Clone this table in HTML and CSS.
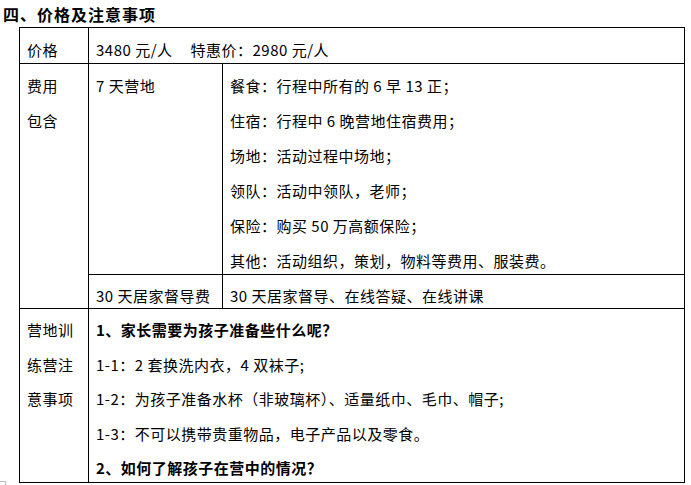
FILE: index.html
```html
<!DOCTYPE html>
<html lang="zh-CN">
<head>
<meta charset="utf-8">
<title>价格及注意事项</title>
<link rel="stylesheet" href="styles.css">
</head>
<body>
<div class="page">
  <h2 class="title">四、价格及注意事项</h2>
  <table class="info">
    <colgroup>
      <col class="c1">
      <col class="c2">
      <col class="c3">
    </colgroup>
    <tr class="r1">
      <td><div class="cell"><p>价格</p></div></td>
      <td colspan="2"><div class="cell"><p>3480 元/人<span class="gap"></span>特惠价：2980 元/人</p></div></td>
    </tr>
    <tr class="r2">
      <td rowspan="2"><div class="cell"><p>费用</p><p>包含</p></div></td>
      <td><div class="cell"><p>7 天营地</p></div></td>
      <td><div class="cell">
        <p>餐食：行程中所有的 6 早 13 正；</p>
        <p>住宿：行程中 6 晚营地住宿费用；</p>
        <p>场地：活动过程中场地；</p>
        <p>领队：活动中领队，老师；</p>
        <p>保险：购买 50 万高额保险；</p>
        <p>其他：活动组织，策划，物料等费用、服装费。</p>
      </div></td>
    </tr>
    <tr class="r3">
      <td><div class="cell"><p>30 天居家督导费</p></div></td>
      <td><div class="cell"><p>30 天居家督导、在线答疑、在线讲课</p></div></td>
    </tr>
    <tr class="r4">
      <td><div class="cell"><p>营地训</p><p>练营注</p><p>意事项</p></div></td>
      <td colspan="2"><div class="cell">
        <p class="strong">1、家长需要为孩子准备些什么呢？</p>
        <p>1-1：2 套换洗内衣，4 双袜子;</p>
        <p>1-2：为孩子准备水杯（非玻璃杯）、适量纸巾、毛巾、帽子;</p>
        <p>1-3：不可以携带贵重物品，电子产品以及零食。</p>
        <p class="strong">2、如何了解孩子在营中的情况？</p>
      </div></td>
    </tr>
  </table>
  <span class="corner"></span>
</div>
</body>
</html>
```
FILE: styles.css
```css
html, body {
  margin: 0;
  padding: 0;
  background: #fff;
}
body {
  width: 691px;
  height: 485px;
  overflow: hidden;
  font-family: "Noto Sans CJK SC", "Liberation Sans", sans-serif;
  color: #000;
}
.page {
  position: relative;
  height: 485px;
}
.title {
  margin: 0;
  padding-left: 3px;
  height: 27px;
  line-height: 28px;
  font-size: 16px;
  font-weight: bold;
  letter-spacing: 1px;
}
.info {
  margin-left: 19px;
  width: 665px;
  border-collapse: collapse;
  table-layout: fixed;
  font-size: 15px;
  letter-spacing: 0.5px;
}
.c1 { width: 69px; }
.c2 { width: 134px; }
.c3 { width: 462px; }
.info td {
  border: 1px solid #000;
  padding: 0 4px 0 7px;
  vertical-align: top;
}
.cell {
  padding-top: 4px;
  margin-bottom: -4px;
}
.cell p {
  margin: 0;
  line-height: 35px;
  height: 35px;
  white-space: nowrap;
}
.r3 .cell p { line-height: 33px; height: 33px; }
.r4 .cell p { line-height: 34.6px; height: 34.6px; }
.strong { font-weight: bold; }
.gap {
  display: inline-block;
  width: 18px;
}
.corner {
  position: absolute;
  left: 0;
  top: 481px;
  width: 5px;
  height: 6px;
  border-top: 1px solid #bbb;
  border-right: 1px solid #bbb;
}
```
